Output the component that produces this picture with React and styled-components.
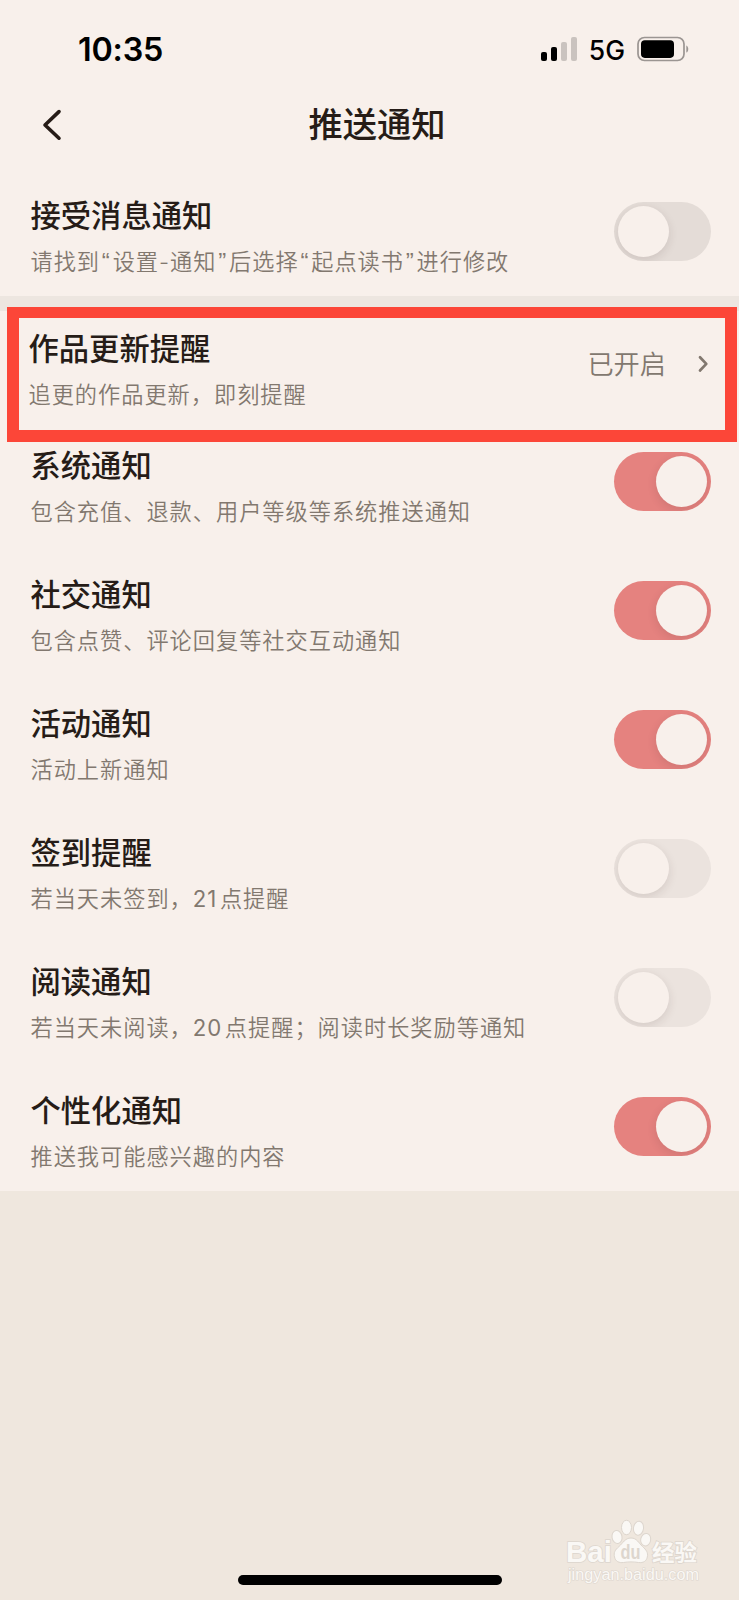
import React, { useState } from 'react'
import styled, { createGlobalStyle } from 'styled-components'

const notices = [
    { title: '系统通知', desc: '包含充值、退款、用户等级等系统推送通知', on: true },
    { title: '社交通知', desc: '包含点赞、评论回复等社交互动通知', on: true },
    { title: '活动通知', desc: '活动上新通知', on: true },
    { title: '签到提醒', desc: '若当天未签到，21点提醒', on: false },
    { title: '阅读通知', desc: '若当天未阅读，20点提醒；阅读时长奖励等通知', on: false },
    { title: '个性化通知', desc: '推送我可能感兴趣的内容', on: true },
]

// quotes and numbers get their own spacing inside Chinese text
const spaced = (text) =>
    text.split(/([“”]|\d+)/).map((part, i) => {
        if (/^[“”]$/.test(part)) return <Quote key={i}>{part}</Quote>
        if (/^\d+$/.test(part)) return <Digits key={i}>{part}</Digits>
        return part
    })

const SettingRow = ({ title, desc, on, strong }) => {
    const [checked, setChecked] = useState(on)
    return (
        <Row>
            <RowText>
                <RowTitle>{title}</RowTitle>
                <RowDesc>{spaced(desc)}</RowDesc>
            </RowText>
            <Switch
                role="switch"
                aria-checked={checked}
                aria-label={title}
                $on={checked}
                $strong={strong}
                onClick={() => setChecked(!checked)}
            >
                <Knob $on={checked} />
            </Switch>
        </Row>
    )
}

const App = () => {
    return (
        <Screen>
            <GlobalStyle />
            <Panel>
                <StatusBar>
                    <Clock>10:35</Clock>
                    <StatusRight>
                        <Signal>
                            <Bar $h={9} />
                            <Bar $h={14} />
                            <Bar $h={19} $off />
                            <Bar $h={24} $off />
                        </Signal>
                        <Network>5G</Network>
                        <Battery width="53" height="26" viewBox="0 0 53 26">
                            <rect x="1" y="1.5" width="46" height="23" rx="6.5" fill="none" stroke="#9b9592" strokeWidth="1.7" />
                            <rect x="4" y="4.2" width="33" height="17.7" rx="3.8" fill="#000" />
                            <path d="M49.3 9.4c2.6 1 2.6 6.2 0 7.2z" fill="#9b9592" />
                        </Battery>
                    </StatusRight>
                </StatusBar>
                <NavBar>
                    <BackButton aria-label="返回">
                        <svg width="20" height="32" viewBox="0 0 20 32">
                            <path d="M17 2.6L3 16l14 13.2" fill="none" stroke="#261c17" strokeWidth="3.6" strokeLinecap="round" strokeLinejoin="round" />
                        </svg>
                    </BackButton>
                    <NavTitle>推送通知</NavTitle>
                </NavBar>
                <SettingRow title="接受消息通知" desc="请找到“设置-通知”后选择“起点读书”进行修改" on={false} strong />
            </Panel>
            <Gap />
            <Panel>
                <UpdateRow>
                    <Highlight />
                    <RowText>
                        <RowTitle>作品更新提醒</RowTitle>
                        <RowDesc>追更的作品更新，即刻提醒</RowDesc>
                    </RowText>
                    <RowValue>
                        <span>已开启</span>
                        <svg width="11" height="18" viewBox="0 0 11 18">
                            <path d="M2 2.3L8.3 8.9 2 15.5" fill="none" stroke="#82786f" strokeWidth="2.7" strokeLinecap="round" strokeLinejoin="round" />
                        </svg>
                    </RowValue>
                </UpdateRow>
                {notices.map((item) => (
                    <SettingRow key={item.title} {...item} />
                ))}
            </Panel>
            <Watermark width="150" height="76" viewBox="0 0 150 76">
                <g fill="#faf8f5" stroke="#ddd6ce" strokeWidth="1">
                    <ellipse cx="57" cy="25" rx="5" ry="6.5" transform="rotate(-10 57 25)" />
                    <ellipse cx="66.5" cy="15.5" rx="5" ry="7.2" />
                    <ellipse cx="78.5" cy="16.2" rx="5" ry="7" transform="rotate(8 78.5 16.2)" />
                    <ellipse cx="85.7" cy="27.7" rx="5" ry="6.3" transform="rotate(12 85.7 27.7)" />
                    <path d="M71 26c-6 0-8 5-12 8.5-4 3.500-5.500 6-4.500 10.500 1 4.500 4.500 6 9 5.500 5-.8 10-.8 15 0 5 .6 8-1.500 8.800-5.500 1-4.500-1-7-4.800-10.500-4-3.500-5.500-8.500-11.500-8.500z" />
                </g>
                <BrandText x="6" y="49.5" textLength="46" lengthAdjust="spacingAndGlyphs">Bai</BrandText>
                <DuText x="60.5" y="46.5" textLength="20" lengthAdjust="spacingAndGlyphs">du</DuText>
                <ChineseText x="92" y="48.5" textLength="45">经验</ChineseText>
                <SiteText x="8" y="68" textLength="131" lengthAdjust="spacingAndGlyphs">jingyan.baidu.com</SiteText>
            </Watermark>
            <HomeIndicator />
        </Screen>
    )
}

export default App

const GlobalStyle = createGlobalStyle`
    * {
        box-sizing: border-box;
    }
    body {
        margin: 0;
        background: #efe7de;
        font-family: Inter, 'Noto Sans CJK SC', sans-serif;
    }
`

const Screen = styled.div`
    position: relative;
    display: flex;
    flex-direction: column;
    width: 739px;
    height: 1600px;
    overflow: hidden;
    background: #efe7de;
`

const Panel = styled.section`
    background: #f8f0eb;
`

const Gap = styled.div`
    height: 15px;
    background: #ede6e0;
`

const StatusBar = styled.div`
    display: flex;
    align-items: center;
    justify-content: space-between;
    height: 98px;
    padding: 0 49px 0 78px;
`

const Clock = styled.span`
    padding-top: 1px;
    font-size: 32.3px;
    font-weight: 600;
    letter-spacing: -0.2px;
    color: #000;
`

const StatusRight = styled.div`
    display: flex;
    align-items: center;
`

const Signal = styled.div`
    display: flex;
    align-items: flex-end;
    gap: 4px;
    height: 24px;
`

const Bar = styled.i`
    width: 6px;
    height: ${(p) => p.$h}px;
    border-radius: 2px;
    background: ${(p) => (p.$off ? '#cac3bf' : '#000')};
`

const Network = styled.span`
    margin: 1px 12px 0;
    font-size: 26.5px;
    font-weight: 500;
    line-height: 30px;
    color: #000;
`

const Battery = styled.svg`
    display: block;
`

const NavBar = styled.header`
    display: grid;
    grid-template-columns: 95px 1fr 80px;
    align-items: center;
    height: 69px;
    padding-bottom: 15px;
`

const BackButton = styled.button`
    display: flex;
    padding: 0 0 0 42px;
    border: 0;
    background: none;
`

const NavTitle = styled.h1`
    margin: 0;
    font-size: 34.3px;
    font-weight: 500;
    line-height: 48px;
    text-align: center;
    color: #261c17;
`

const Row = styled.div`
    display: flex;
    align-items: center;
    justify-content: space-between;
    height: 129px;
    padding: 0 28px 0 30.5px;
`

const UpdateRow = styled(Row)`
    position: relative;
    height: 106px;
    padding: 0 30px 0 28.5px;
`

const Highlight = styled.div`
    position: absolute;
    top: -4px;
    right: 2px;
    left: 7px;
    height: 135px;
    border: 12px solid #fc4638;
    border-width: 11px 12px 12px;
    pointer-events: none;
`

const RowText = styled.div`
    padding-top: 10px;
`

const RowTitle = styled.h2`
    margin: 0;
    font-size: 30.3px;
    font-weight: 500;
    line-height: 50px;
    color: #261c17;
`

const RowDesc = styled.p`
    margin: 0;
    font-size: 22.2px;
    font-weight: 350;
    line-height: 41px;
    letter-spacing: 1px;
    color: #82786f;
`

const Quote = styled.span`
    padding: 0 1.8px;
    font-family: 'Liberation Sans', sans-serif;
    font-size: 24px;
    font-weight: 400;
    line-height: 1;
`

const Digits = styled.span`
    margin-right: 2.5px;
    font-weight: 400;
    line-height: 1;
`

const RowValue = styled.div`
    display: flex;
    align-items: center;
    gap: 32px;
    font-size: 26.2px;
    font-weight: 350;
    line-height: 38px;
    color: #82786f;

    & > span {
        padding-top: 2px;
    }
`

const Switch = styled.button`
    width: 97px;
    height: 59px;
    padding: 4px;
    border: 0;
    border-radius: 30px;
    overflow: hidden;
    background: ${(p) => (p.$on ? '#e5827f' : p.$strong ? '#e4dcd7' : '#ebe3de')};
`

const Knob = styled.span`
    display: block;
    width: 51px;
    height: 51px;
    margin-left: ${(p) => (p.$on ? 38 : 0)}px;
    border-radius: 50%;
    background: #f8f0eb;
    box-shadow: 0 3px 10px rgba(60, 40, 40, 0.13);
`

const Watermark = styled.svg`
    position: absolute;
    top: 1512px;
    left: 560px;
`

const BrandText = styled.text`
    font: 700 29px 'Liberation Sans', sans-serif;
    fill: #faf8f5;
    stroke: #ddd6ce;
    stroke-width: 1.6px;
    paint-order: stroke;
`

const DuText = styled(BrandText)`
    font-size: 20px;
    fill: #ddd6ce;
    stroke: none;
`

const ChineseText = styled(BrandText)`
    font: 700 22.5px 'Noto Sans CJK SC', sans-serif;
`

const SiteText = styled(BrandText)`
    font: 400 16px 'Liberation Sans', sans-serif;
    stroke-width: 1.2px;
`

const HomeIndicator = styled.div`
    position: absolute;
    bottom: 15px;
    left: 238px;
    width: 264px;
    height: 10px;
    border-radius: 5px;
    background: #000;
`
